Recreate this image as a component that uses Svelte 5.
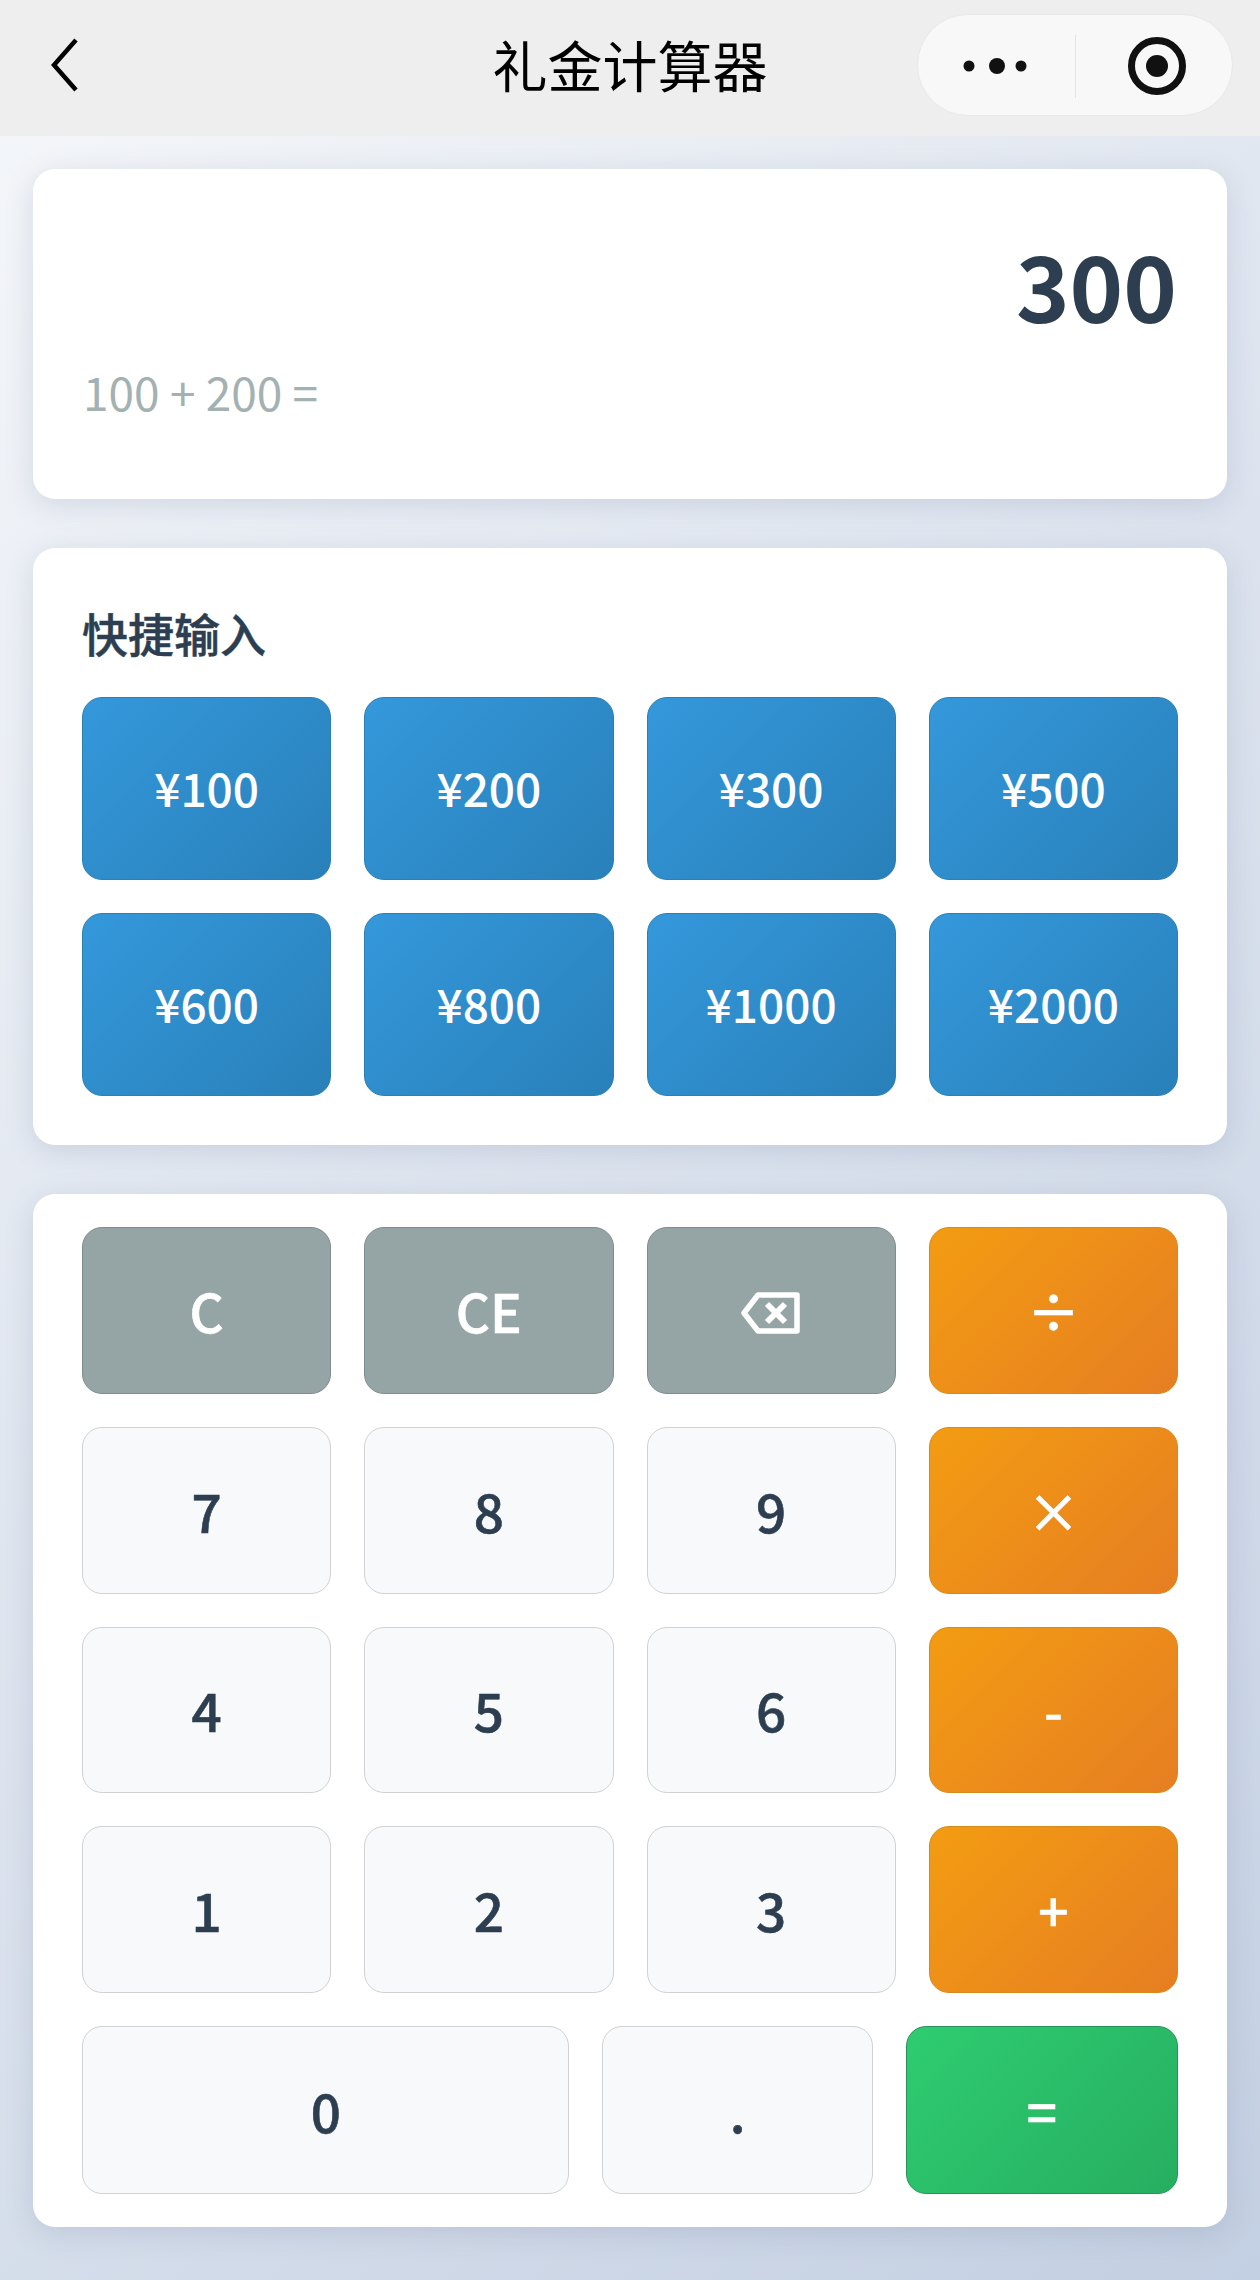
<script>
  const quick = [100, 200, 300, 500, 600, 800, 1000, 2000];
  const rows = [
    [['C','fn'],['CE','fn'],['back','fn'],['÷','op']],
    [['7','num'],['8','num'],['9','num'],['×','op']],
    [['4','num'],['5','num'],['6','num'],['-','op']],
    [['1','num'],['2','num'],['3','num'],['+','op']]
  ];
</script>

<div class="page">
  <header class="nav">
    <svg class="back" width="32" height="54" viewBox="0 0 32 54"><path d="M28 2 L6 27 L28 52" fill="none" stroke="#000" stroke-width="4.5"/></svg>
    <h1>礼金计算器</h1>
    <div class="capsule">
      <svg class="dots" width="66" height="24" viewBox="0 0 66 24"><circle cx="6" cy="12" r="5.5" fill="#111"/><circle cx="34" cy="12" r="8" fill="#111"/><circle cx="58" cy="12" r="5.5" fill="#111"/></svg>
      <span class="sep"></span>
      <svg class="target" width="60" height="60" viewBox="0 0 60 60"><circle cx="30" cy="30" r="25.5" fill="none" stroke="#111" stroke-width="7"/><circle cx="30" cy="30" r="11" fill="#111"/></svg>
    </div>
  </header>

  <main class="content">
    <section class="card display">
      <div class="result">300</div>
      <div class="expr">100 + 200 =</div>
    </section>

    <section class="card quick">
      <h2>快捷输入</h2>
      <div class="grid4 quick-grid">
        {#each quick as q}
          <button class="btn blue">¥{q}</button>
        {/each}
      </div>
    </section>

    <section class="card keypad">
      {#each rows as row}
        <div class="grid4 key-row">
          {#each row as [k, kind]}
            <button class="btn {kind}">
              {#if k === 'back'}
                <svg class="bksp" width="60" height="42" viewBox="0 0 60 42"><path d="M17 3 H56 V39 H17 L3 21 Z" fill="none" stroke="#fff" stroke-width="5.5" stroke-linejoin="round"/><path d="M26 12 L44 30 M44 12 L26 30" stroke="#fff" stroke-width="6"/></svg>
              {:else}
                {k}
              {/if}
            </button>
          {/each}
        </div>
      {/each}
      <div class="last-row">
        <button class="btn num">0</button>
        <button class="btn num">.</button>
        <button class="btn eq">=</button>
      </div>
    </section>
  </main>
</div>

<style>
  :global(body) { margin: 0; }
  .page {
    width: 1260px;
    height: 2280px;
    overflow: hidden;
    font-family: "Noto Sans CJK SC", "Noto Sans", sans-serif;
    background: linear-gradient(135deg, #f5f7fa 0%, #c3cfe2 100%);
    color: #2c3e50;
  }
  .nav {
    height: 136px;
    background: #eeeeee;
    display: flex;
    align-items: center;
    position: relative;
  }
  .back { position: absolute; left: 48px; top: 38px; }
  h1 {
    flex: 1;
    margin: 0;
    text-align: center;
    font-size: 55px;
    font-weight: 400;
    color: #000;
    line-height: 126px;
    height: 136px;
  }
  .capsule {
    position: absolute;
    left: 917px;
    top: 14px;
    width: 316px;
    height: 102px;
    box-sizing: border-box;
    border-radius: 51px;
    background: #f8f8f8;
    border: 1px solid #e8e8e8;
  }
  .dots { position: absolute; left: 45px; top: 39px; }
  .sep { position: absolute; left: 157px; top: 20px; width: 1px; height: 63px; background: #e3e3e3; }
  .target { position: absolute; left: 209px; top: 21px; }
  .content {
    padding: 33px 33px 0;
    display: flex;
    flex-direction: column;
    gap: 49px;
  }
  .card {
    background: #fff;
    border-radius: 22px;
    box-shadow: 0 6px 28px rgba(90, 105, 140, 0.18);
    box-sizing: border-box;
  }
  .display { height: 330px; padding: 0 50px; position: relative; }
  .result {
    text-align: right;
    font-size: 91px;
    font-weight: 700;
    line-height: 120px;
    padding-top: 54px;
  }
  .expr {
    font-size: 46px;
    font-weight: 400;
    color: #a3b1b2;
    line-height: 60px;
    margin-top: 18px;
  }
  .quick { height: 597px; padding: 47px 49px 0; }
  h2 {
    margin: 0 0 27px;
    font-size: 46px;
    font-weight: 500;
    line-height: 74px;
    height: 75px;
    -webkit-text-stroke: 0.5px #2c3e50;
  }
  .grid4 {
    display: grid;
    grid-template-columns: repeat(4, 1fr);
    gap: 33px;
  }
  .quick-grid { grid-auto-rows: 183px; }
  .keypad {
    height: 1033px;
    padding: 33px 49px;
    display: flex;
    flex-direction: column;
    gap: 33px;
  }
  .key-row { height: 167px; }
  .last-row {
    display: grid;
    grid-template-columns: 487fr 270fr 272fr;
    gap: 33px;
    height: 168px;
  }
  .btn {
    font-family: inherit;
    border-radius: 20px;
    border: 1.5px solid transparent;
    box-sizing: border-box;
    padding: 0;
    margin: 0;
    display: flex;
    align-items: center;
    justify-content: center;
    color: #fff;
    font-weight: 500;
    font-size: 53px;
    line-height: 1;
    -webkit-text-stroke: 0.6px currentColor;
  }
  .bksp { margin-top: 5px; }
  .blue {
    background: linear-gradient(135deg, #3498db, #2980b9);
    border-color: #2a7fb5;
    font-size: 46px;
    font-weight: 500;
    padding-bottom: 3px;
    -webkit-text-stroke: 0;
  }
  .fn { background: #95a5a6; border-color: #7f8c8d; }
  .op { background: linear-gradient(135deg, #f39c12, #e67e22); border-color: #d58a1c; }
  .eq { background: linear-gradient(135deg, #2ecc71, #27ae60); border-color: #27935a; }
  .num { background: #f8f9fa; border-color: #cfd1d3; color: #2c3e50; }
</style>
